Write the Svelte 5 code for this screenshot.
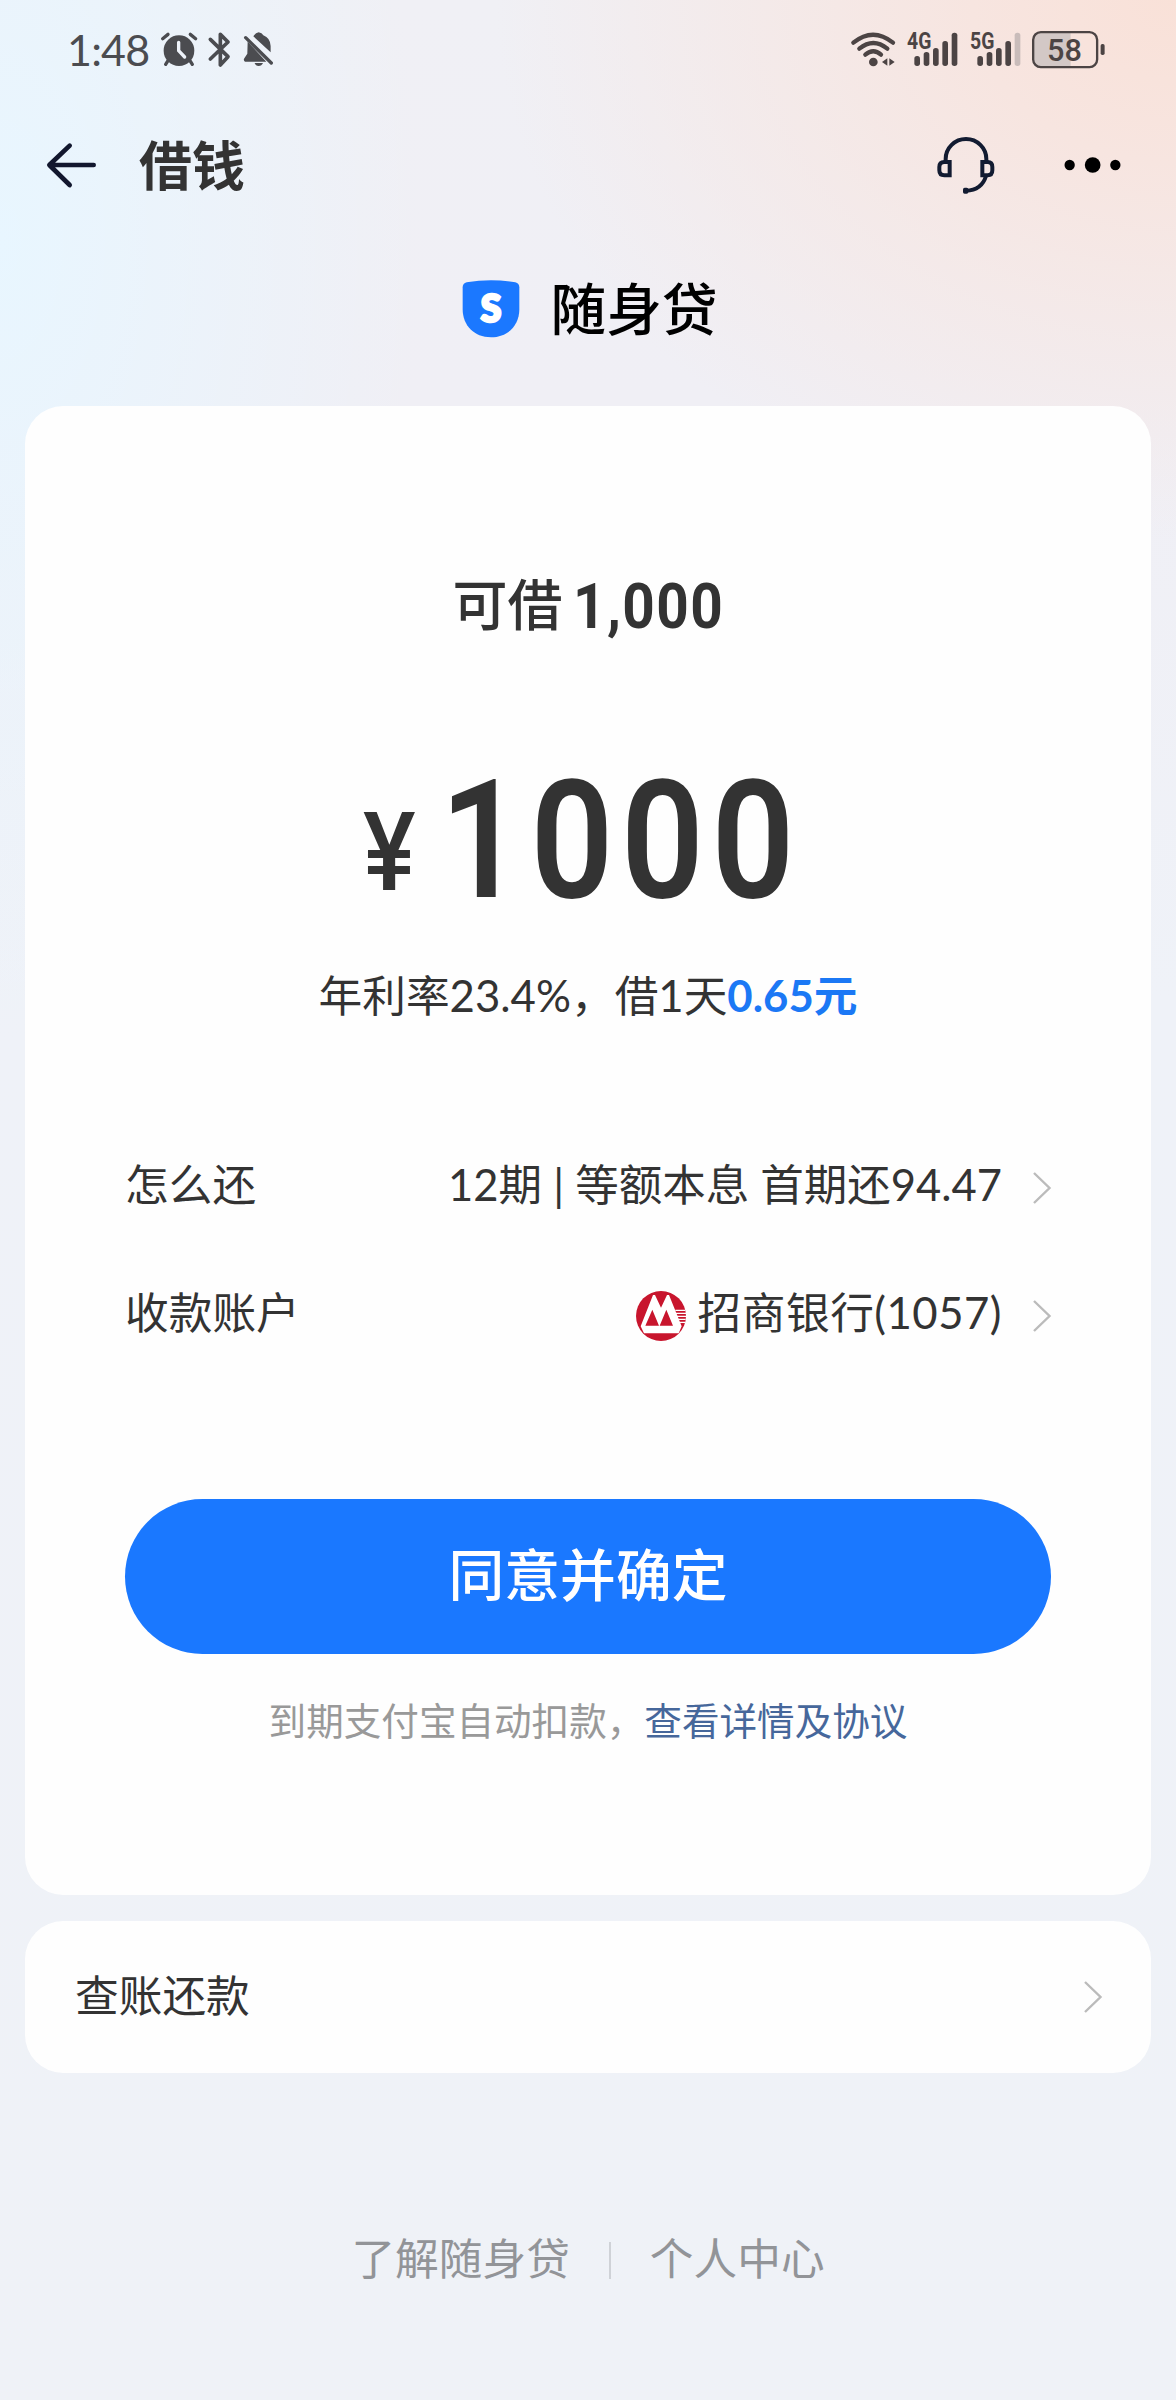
<script>
	let limit = $state(1000);
	let amount = $state(1000);
	let rate = 23.4;
	let periods = 12;
	let bank = { name: "招商银行", tail: "1057" };

	// 4G is full, 5G is missing its last bar
	const networks = [
		{ name: "4G", bars: 5 },
		{ name: "5G", bars: 4 }
	];
	const heights = [30, 42, 54, 75, 100];
</script>

{#snippet chevron()}
	<svg class="chevron" viewBox="0 0 18 32"><path d="M1 1L16.5 16L1 31" /></svg>
{/snippet}

<div class="page">
	<div class="status">
		<span class="time">1:48</span>
		<svg width="38.3" height="40" viewBox="360 60 115 120">
			<circle cx="417" cy="122" r="46" fill="#4b4c50" />
			<path d="M368 86L384 73M451 73L467 86M384 152L377 163M450 152L457 163" stroke="#4b4c50" stroke-width="10" stroke-linecap="round" />
			<path d="M416 97V122L434 141" stroke="#eef3fa" stroke-width="10" stroke-linecap="round" fill="none" />
		</svg>
		<svg class="bt" width="26.7" height="40" viewBox="500 60 80 120">
			<path d="M513 88L566 140L543 165V73L566 96L513 147" stroke="#4b4c50" stroke-width="11" stroke-linecap="round" stroke-linejoin="round" fill="none" />
		</svg>
		<svg class="bell" width="33.3" height="40" viewBox="605 60 100 120">
			<path d="M639 79Q645 69 655 67Q665 69 669 76Q690 84 691 108V127Z" fill="#4b4c50" />
			<path d="M622 95L678 155H614Q608 151 612 145L621 131Z" fill="#4b4c50" />
			<path d="M643 159H668Q664 168 655 168Q646 168 643 159Z" fill="#4b4c50" />
			<path d="M616 83L693 159" stroke="#4b4c50" stroke-width="10" stroke-linecap="round" />
		</svg>
		<div class="signals">
			<svg width="45" height="40" viewBox="65 60 135 120">
				<path d="M72 98Q131 50 191 98M90 116Q132 82 174 116M108 134Q132 114 155 134" stroke="#4c4444" stroke-width="13" stroke-linecap="round" fill="none" />
				<circle cx="132" cy="156" r="13" fill="#4c4444" />
				<path d="M158 156L174 145V167ZM196 156L180 145V167Z" fill="#4c4444" />
			</svg>
			{#each networks as net}
				<svg class="net" width="50.7" height="40" viewBox="0 60 152 120">
					<text x="0" y="117" textLength="73" lengthAdjust="spacingAndGlyphs">{net.name}</text>
					{#each heights as h, i}
						<rect class:off={i >= net.bars} x={22 + i * 28} y={168 - h} width="17" height={h} rx="8" />
					{/each}
				</svg>
			{/each}
			<svg class="battery" width="73.3" height="40" viewBox="606 60 220 120">
				<path d="M632 68H722V170H632Q611 170 611 149V89Q611 68 632 68Z" fill="#d3c8c6" />
				<rect x="609.500" y="66.500" width="192" height="105" rx="23" fill="none" stroke="#4c4444" stroke-width="7" />
				<rect x="812" y="102" width="12" height="33" rx="5" fill="#4c4444" />
				<text x="651" y="152">58</text>
			</svg>
		</div>
	</div>

	<header>
		<svg width="50" height="50" viewBox="20 391 150 150">
			<path d="M91 408L30 466L91 526M32 466H163" stroke="#12172e" stroke-width="14" stroke-linecap="round" stroke-linejoin="round" fill="none" />
		</svg>
		<h1>借钱</h1>
		<svg class="service" width="60" height="60" viewBox="318 372 180 180">
			<g stroke="#121b31" stroke-width="12" fill="none">
				<path d="M347 450V444A61 60 0 0 1 469 444V450M468 495Q455 538 408 539" />
				<path d="M359 453H343Q328 453 328 468V478Q328 493 343 493H359Z" />
				<path d="M457 453H473Q487 453 487 468V478Q487 493 473 493H457Z" />
			</g>
			<rect x="399" y="530" width="16" height="18" rx="5" fill="#121b31" />
		</svg>
		<svg class="more" width="57" height="20" viewBox="702 432 171 60">
			<circle cx="719" cy="462" r="15.500" />
			<circle cx="788" cy="462" r="23.500" />
			<circle cx="856" cy="462" r="15.500" />
		</svg>
	</header>

	<div class="brand">
		<svg width="58" height="58" viewBox="98 92 174 174">
			<path d="M100 114Q100 102 112 99Q185 87 258 99Q270 102 270 114V180C270 228 236 264 185 264C134 264 100 228 100 180Z" fill="#1b78ff" />
			<text x="185" y="217" text-anchor="middle">S</text>
		</svg>
		<span class="up">随身贷</span>
	</div>

	<main class="card">
		<div class="limit"><span>可借</span><b>{limit.toLocaleString("en-US")}</b></div>
		<div class="amount"><span class="yen">¥</span><span class="num">{amount}</span></div>
		<div class="rate">年利率{rate}%，借1天<b>0.65元</b></div>
		<div class="row">
			<span class="up">怎么还</span>
			<span class="value up plan">{periods}期 | 等额本息 首期还94.47</span>
			{@render chevron()}
		</div>
		<div class="row">
			<span class="up">收款账户</span>
			<div class="value">
				<svg class="logo" width="50" height="50" viewBox="0 0 150 150">
					<circle cx="75" cy="75" r="75" fill="#c8152d" />
					<path d="M14 106L51 12H57L75 50L93 12H99L137 106L128 127H24Z" fill="#fff" />
					<path d="M28 104L49 56L69 104ZM71 104L91 56L111 104Z" fill="#c8152d" />
					<path d="M118 58H148M120 67H150M123 76H150M126 85H149M130 94H147" stroke="#fff" stroke-width="4" />
				</svg>
				<span class="up bank">{bank.name}({bank.tail})</span>
			</div>
			{@render chevron()}
		</div>
		<button>同意并确定</button>
		<div class="note">到期支付宝自动扣款，<a href="#detail">查看详情及协议</a></div>
	</main>

	<div class="card bills">
		<span class="up">查账还款</span>
		{@render chevron()}
	</div>

	<footer>
		<span class="up">了解随身贷</span>
		<i></i>
		<span class="up">个人中心</span>
	</footer>
</div>

<style>
	:global(body) {
		margin: 0;
	}
	.page {
		width: 1176px;
		height: 2400px;
		overflow: hidden;
		box-sizing: border-box;
		font-family: Lato, "Noto Sans CJK SC", sans-serif;
		font-size: 43.7px;
		color: #333;
		background:
			radial-gradient(ellipse 680px 540px at 100% 0, #f9e1d8 0%, #f7e5e0 30%, rgba(245, 234, 234, 0) 100%),
			radial-gradient(ellipse 420px 800px at 0 240px, #e8f6ff 0%, rgba(232, 246, 255, 0) 100%),
			linear-gradient(#f0f0f5, #f0eff5 400px, #eff2f8 1000px, #eff2f7);
	}
	svg {
		display: block;
		flex: none;
		overflow: visible;
	}
	/* the CJK face sits low in its line box */
	.up {
		padding-bottom: 8px;
	}
	.status {
		display: flex;
		height: 40px;
		padding: 30px 71px 0 67px;
	}
	.time {
		width: 93px;
		font-size: 43px;
		line-height: 40px;
		letter-spacing: -0.8px;
		color: #4b4c50;
		white-space: nowrap;
	}
	.bt {
		margin-left: 8px;
	}
	.bell {
		margin-left: 9px;
	}
	.signals {
		display: flex;
		margin-left: auto;
		gap: 11.5px;
	}
	.net text, .battery text {
		font-family: Roboto, sans-serif;
		font-weight: 700;
		font-size: 70px;
		fill: #4c4444;
	}
	.battery text {
		font-weight: 500;
		font-size: 92px;
	}
	.net rect {
		fill: #4c4444;
	}
	.net rect.off {
		fill: #c9bcba;
	}
	header {
		display: flex;
		align-items: center;
		height: 100px;
		margin-top: 45px;
		padding: 0 55px 0 46px;
		box-sizing: border-box;
	}
	h1 {
		margin: 1px auto 0 43px;
		font-size: 53px;
		line-height: 80px;
		font-weight: 700;
	}
	.more {
		margin-left: 68px;
	}
	.brand {
		display: flex;
		justify-content: center;
		align-items: center;
		gap: 30px;
		height: 90px;
		margin-top: 49px;
		padding-left: 4px;
		font-size: 55.7px;
		font-weight: 500;
		color: #000;
	}
	.brand text {
		font-family: Lato, sans-serif;
		font-weight: 900;
		font-size: 112px;
		fill: #fff;
		stroke: #fff;
		stroke-width: 8;
	}
	.card {
		box-sizing: border-box;
		margin: 52px 25px 0;
		height: 1489px;
		padding: 158px 100px 0;
		border-radius: 38px;
		background: #fefefe;
		text-align: center;
	}
	.limit {
		display: flex;
		justify-content: center;
		align-items: baseline;
		gap: 11px;
		height: 80px;
		padding-left: 2px;
		line-height: 80px;
		font-size: 55px;
		font-weight: 500;
	}
	.limit b, .amount {
		font-family: Roboto, sans-serif;
		font-size: 63px;
		font-weight: 700;
	}
	.limit b {
		position: relative;
		top: 3px;
		letter-spacing: 1.6px;
		transform: scaleX(0.9);
		transform-origin: left;
		margin-right: -16px;
	}
	.amount {
		display: flex;
		justify-content: center;
		align-items: baseline;
		height: 200px;
		margin-top: 97px;
		padding-right: 14px;
		line-height: 200px;
		font-weight: 600;
	}
	.yen {
		position: relative;
		top: -7px;
		margin-right: 22px;
		font-size: 110px;
		font-weight: 500;
		transform: scaleX(0.9);
	}
	/* narrow digits, close to a DIN face */
	.num {
		font-size: 165px;
		letter-spacing: 8.6px;
		transform: scaleX(0.88);
		transform-origin: left;
		margin-right: -49px;
	}
	.rate {
		margin-top: 19px;
		height: 70px;
		line-height: 70px;
	}
	.rate b {
		color: #1b78f5;
	}
	.row {
		display: flex;
		align-items: center;
		height: 128px;
	}
	.rate + .row {
		margin-top: 92px;
	}
	.value {
		display: flex;
		align-items: center;
		gap: 12px;
		margin-left: auto;
		margin-right: 31px;
		white-space: pre;
	}
	.plan {
		font-size: 43.5px;
	}
	.bank {
		letter-spacing: 0.5px;
	}
	.logo {
		margin-top: 3px;
	}
	.chevron {
		width: 18px;
		height: 32px;
		fill: none;
		stroke: #bbb;
		stroke-width: 2.4;
	}
	.row .chevron {
		margin-top: 3px;
	}
	button {
		display: block;
		width: 926px;
		height: 155px;
		margin-top: 121px;
		padding: 0 0 11px;
		border: 0;
		border-radius: 78px;
		background: #1a78ff;
		color: #fff;
		font: 500 55.8px "Noto Sans CJK SC", sans-serif;
	}
	.note {
		margin-top: 32px;
		line-height: 70px;
		font-size: 37.6px;
		color: #999;
	}
	.note a {
		color: #46679b;
		text-decoration: none;
	}
	.bills {
		display: flex;
		justify-content: space-between;
		align-items: center;
		height: 152px;
		margin-top: 26px;
		padding: 0 49px 0 50px;
	}
	footer {
		display: flex;
		justify-content: center;
		align-items: center;
		gap: 39px;
		height: 80px;
		margin-top: 147px;
		color: #929498;
	}
	footer i {
		width: 2px;
		height: 37px;
		background: #cfd2d7;
	}
</style>
